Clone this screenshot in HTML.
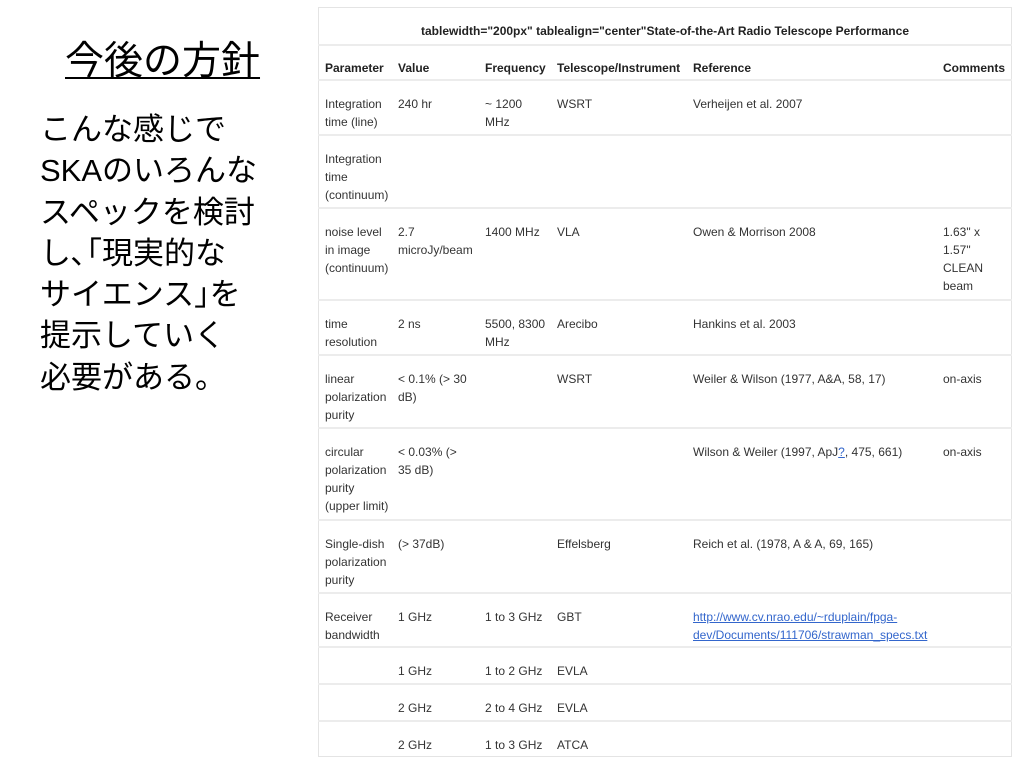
<!DOCTYPE html>
<html><head><meta charset="utf-8"><style>
body{margin:0;width:1024px;height:768px;background:#fff;position:relative;overflow:hidden;font-family:"Liberation Sans","Noto Sans CJK JP",sans-serif}
.jp{position:absolute;font-family:"Liberation Sans","Noto Sans CJK JP",sans-serif;color:#000;white-space:nowrap}
#tbl{position:absolute;left:318px;top:7px;width:694px;height:750px;border:1px solid #e4e4e4;box-sizing:border-box}
.hl{position:absolute;left:318px;width:694px;height:2px;background:#ececec}
.t{position:absolute;font-size:12px;line-height:18px;color:#333;white-space:nowrap}
.b{font-weight:bold;color:#222}
a{color:#3366cc;text-decoration:underline}
</style></head><body>
<div class="jp" style="left:65px;top:40px;font-size:39px;line-height:44px;text-decoration:underline;text-decoration-thickness:2px;text-underline-offset:3px">今後の方針</div>
<div class="jp" style="left:40px;top:109px;font-size:31px;line-height:41.3px">こんな感じで<br>SKAのいろんな<br>スペックを検討<br>し､｢現実的な<br>サイエンス｣を<br>提示していく<br>必要がある。</div>
<div id="tbl"></div>
<div class="hl" style="top:44px"></div><div class="hl" style="top:79px"></div><div class="hl" style="top:134px"></div><div class="hl" style="top:207px"></div><div class="hl" style="top:299px"></div><div class="hl" style="top:354px"></div><div class="hl" style="top:427px"></div><div class="hl" style="top:519px"></div><div class="hl" style="top:592px"></div><div class="hl" style="top:646px"></div><div class="hl" style="top:683px"></div><div class="hl" style="top:720px"></div>
<div class="t b" style="left:318px;width:694px;text-align:center;top:22px">tablewidth="200px" tablealign="center"State-of-the-Art Radio Telescope Performance</div>
<div class="t b" style="left:325px;top:59px">Parameter</div><div class="t b" style="left:398px;top:59px">Value</div><div class="t b" style="left:485px;top:59px">Frequency</div><div class="t b" style="left:557px;top:59px">Telescope/Instrument</div><div class="t b" style="left:693px;top:59px">Reference</div><div class="t b" style="left:943px;top:59px">Comments</div>

<div class="t" style="left:325px;top:95px">Integration<br>time (line)</div><div class="t" style="left:398px;top:95px">240 hr</div><div class="t" style="left:485px;top:95px">~ 1200<br>MHz</div><div class="t" style="left:557px;top:95px">WSRT</div><div class="t" style="left:693px;top:95px">Verheijen et al. 2007</div>

<div class="t" style="left:325px;top:150px">Integration<br>time<br>(continuum)</div>

<div class="t" style="left:325px;top:223px">noise level<br>in image<br>(continuum)</div><div class="t" style="left:398px;top:223px">2.7<br>microJy/beam</div><div class="t" style="left:485px;top:223px">1400 MHz</div><div class="t" style="left:557px;top:223px">VLA</div><div class="t" style="left:693px;top:223px">Owen &amp; Morrison 2008</div><div class="t" style="left:943px;top:223px">1.63" x<br>1.57"<br>CLEAN<br>beam</div>

<div class="t" style="left:325px;top:315px">time<br>resolution</div><div class="t" style="left:398px;top:315px">2 ns</div><div class="t" style="left:485px;top:315px">5500, 8300<br>MHz</div><div class="t" style="left:557px;top:315px">Arecibo</div><div class="t" style="left:693px;top:315px">Hankins et al. 2003</div>

<div class="t" style="left:325px;top:370px">linear<br>polarization<br>purity</div><div class="t" style="left:398px;top:370px">&lt; 0.1% (&gt; 30<br>dB)</div><div class="t" style="left:557px;top:370px">WSRT</div><div class="t" style="left:693px;top:370px">Weiler &amp; Wilson (1977, A&amp;A, 58, 17)</div><div class="t" style="left:943px;top:370px">on-axis</div>

<div class="t" style="left:325px;top:443px">circular<br>polarization<br>purity<br>(upper limit)</div><div class="t" style="left:398px;top:443px">&lt; 0.03% (&gt;<br>35 dB)</div><div class="t" style="left:693px;top:443px">Wilson &amp; Weiler (1997, ApJ<a>?</a>, 475, 661)</div><div class="t" style="left:943px;top:443px">on-axis</div>

<div class="t" style="left:325px;top:535px">Single-dish<br>polarization<br>purity</div><div class="t" style="left:398px;top:535px">(&gt; 37dB)</div><div class="t" style="left:557px;top:535px">Effelsberg</div><div class="t" style="left:693px;top:535px">Reich et al. (1978, A &amp; A, 69, 165)</div>

<div class="t" style="left:325px;top:608px">Receiver<br>bandwidth</div><div class="t" style="left:398px;top:608px">1 GHz</div><div class="t" style="left:485px;top:608px">1 to 3 GHz</div><div class="t" style="left:557px;top:608px">GBT</div><div class="t" style="left:693px;top:608px"><a>http://www.cv.nrao.edu/~rduplain/fpga-</a><br><a>dev/Documents/111706/strawman_specs.txt</a></div>

<div class="t" style="left:398px;top:662px">1 GHz</div><div class="t" style="left:485px;top:662px">1 to 2 GHz</div><div class="t" style="left:557px;top:662px">EVLA</div>
<div class="t" style="left:398px;top:699px">2 GHz</div><div class="t" style="left:485px;top:699px">2 to 4 GHz</div><div class="t" style="left:557px;top:699px">EVLA</div>
<div class="t" style="left:398px;top:736px">2 GHz</div><div class="t" style="left:485px;top:736px">1 to 3 GHz</div><div class="t" style="left:557px;top:736px">ATCA</div>
</body></html>
